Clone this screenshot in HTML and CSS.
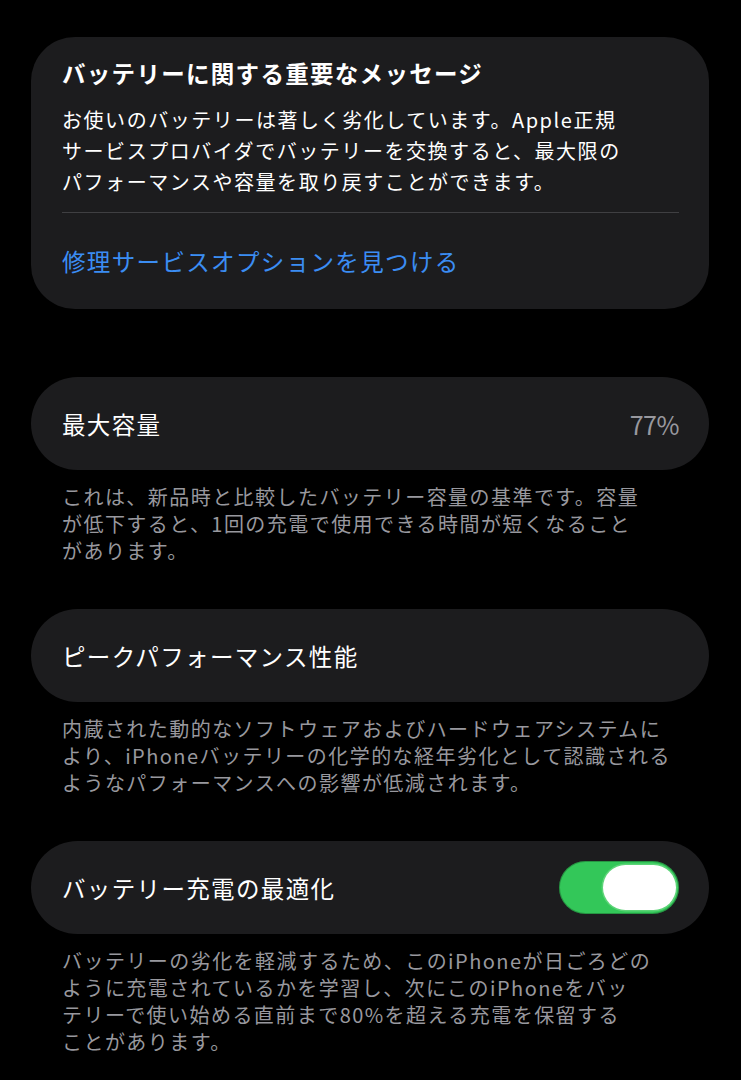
FILE: index.html
```html
<!DOCTYPE html>
<html lang="ja">
<head>
<meta charset="utf-8">
<title>バッテリーの状態</title>
<link rel="stylesheet" href="styles.css">
</head>
<body>
<main class="page">
  <section class="card message">
    <h2 class="message-title">バッテリーに関する重要なメッセージ</h2>
    <p class="message-body">お使いのバッテリーは著しく劣化しています。Apple正規<br>サービスプロバイダでバッテリーを交換すると、最大限の<br>パフォーマンスや容量を取り戻すことができます。</p>
    <div class="divider"></div>
    <a class="link" href="#">修理サービスオプションを見つける</a>
  </section>

  <section class="group">
    <div class="card row">
      <span class="label">最大容量</span>
      <span class="value">77%</span>
    </div>
    <p class="footer">これは、新品時と比較したバッテリー容量の基準です。容量<br>が低下すると、1回の充電で使用できる時間が短くなること<br>があります。</p>
  </section>

  <section class="group">
    <div class="card row">
      <span class="label">ピークパフォーマンス性能</span>
    </div>
    <p class="footer">内蔵された動的なソフトウェアおよびハードウェアシステムに<br>より、iPhoneバッテリーの化学的な経年劣化として認識される<br>ようなパフォーマンスへの影響が低減されます。</p>
  </section>

  <section class="group">
    <div class="card row">
      <span class="label">バッテリー充電の最適化</span>
      <span class="toggle on"><span class="knob"></span></span>
    </div>
    <p class="footer">バッテリーの劣化を軽減するため、このiPhoneが日ごろどの<br>ように充電されているかを学習し、次にこのiPhoneをバッ<br>テリーで使い始める直前まで80%を超える充電を保留する<br>ことがあります。</p>
  </section>
</main>
</body>
</html>
```

FILE: styles.css
```css
* { box-sizing: border-box; }

html, body {
  margin: 0;
  padding: 0;
  background: #000;
}

body {
  font-family: "Noto Sans CJK JP", "Noto Sans", "Liberation Sans", sans-serif;
  color: #fff;
  -webkit-font-smoothing: antialiased;
}

.page {
  padding: 37px 32px 0 31px;
  display: flex;
  flex-direction: column;
}

.card {
  background: #1c1c1e;
}

.message {
  border-radius: 44px;
  padding: 20px 30px 32px 31px;
  display: flex;
  flex-direction: column;
}

.message-title {
  margin: 0;
  font-size: 23.5px;
  line-height: 32px;
  font-weight: 700;
  letter-spacing: 1.3px;
}

.message-body {
  margin: 15px 0 0;
  font-size: 20px;
  line-height: 31px;
  letter-spacing: 1.55px;
}

.divider {
  height: 1px;
  background: #3f3f42;
  margin-top: 15px;
}

.link {
  margin-top: 32px;
  font-size: 23.5px;
  line-height: 32px;
  letter-spacing: 1.35px;
  color: #3b8df3;
  text-decoration: none;
}

.group {
  margin-top: 68px;
  display: flex;
  flex-direction: column;
}

.group + .group {
  margin-top: 45.5px;
}

.row {
  height: 93px;
  border-radius: 46.5px;
  padding: 0 30px 0 31px;
  display: flex;
  align-items: center;
  justify-content: space-between;
}

.label {
  font-size: 23.5px;
  letter-spacing: 1.35px;
  line-height: 32px;
}

.value {
  font-size: 25px;
  color: #98989e;
  line-height: 32px;
  letter-spacing: -0.5px;
}

.footer {
  margin: 12.5px 0 0;
  padding-left: 31px;
  font-size: 20px;
  line-height: 27px;
  letter-spacing: 1.45px;
  color: #98989e;
}

.toggle {
  width: 120px;
  height: 53px;
  border-radius: 27px;
  background: #33c759;
  box-shadow: inset 0 0 0 1px rgba(0, 0, 0, 0.25);
  display: flex;
  align-items: center;
  justify-content: flex-end;
  padding: 0 3px;
}

.knob {
  width: 73px;
  height: 45px;
  border-radius: 23px;
  background: #fff;
  box-shadow: 0 0 0 1.5px rgba(120, 220, 140, 0.6);
}
```
